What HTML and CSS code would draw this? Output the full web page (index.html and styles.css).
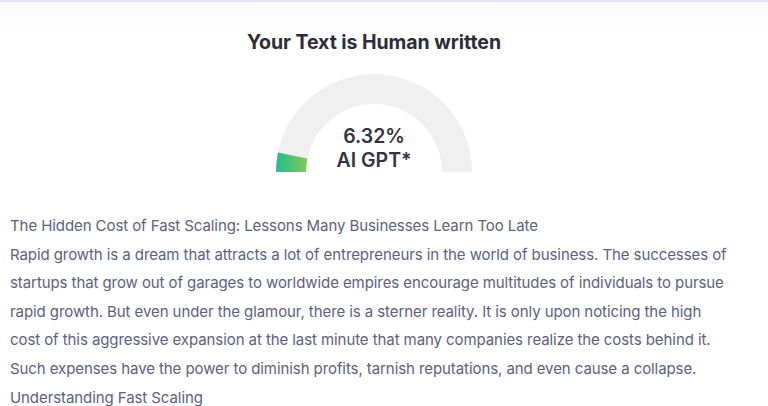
FILE: index.html
```html
<!DOCTYPE html>
<html>
<head>
<meta charset="utf-8">
<link rel="stylesheet" href="styles.css">
</head>
<body>
<div class="page">
  <div class="content">
    <h1 class="title">Your Text is Human written</h1>
    <div class="gauge">
      <svg class="gauge-svg" width="196" height="98" viewBox="0 0 196 98">
        <defs>
          <linearGradient id="g" x1="0" y1="0" x2="1" y2="0">
            <stop offset="0" stop-color="#22bd8c"/>
            <stop offset="1" stop-color="#85c85b"/>
          </linearGradient>
        </defs>
        <path d="M0 98 A98 98 0 0 1 196 98 L166 98 A68 68 0 0 0 30 98 Z" fill="#f0f0f0"/>
        <path d="M0 98 A98 98 0 0 1 1.95 78.58 L31.35 84.52 A68 68 0 0 0 30 98 Z" fill="url(#g)"/>
      </svg>
      <div class="gauge-label">
        <div class="pct">6.32%</div>
        <div class="kind">AI GPT*</div>
      </div>
    </div>
    <div class="text">
      <p>The Hidden Cost of Fast Scaling: Lessons Many Businesses Learn Too Late</p>
      <p>Rapid growth is a dream that attracts a lot of entrepreneurs in the world of business. The successes of startups that grow out of garages to worldwide empires encourage multitudes of individuals to pursue rapid growth. But even under the glamour, there is a sterner reality. It is only upon noticing the high cost of this aggressive expansion at the last minute that many companies realize the costs behind it. Such expenses have the power to diminish profits, tarnish reputations, and even cause a collapse.</p>
      <p>Understanding Fast Scaling</p>
    </div>
  </div>
</div>
</body>
</html>
```
FILE: styles.css
```css
html, body {
  margin: 0;
  padding: 0;
  background: #ffffff;
}
.page {
  border-top: 2px solid #e3e3f3;
  background: linear-gradient(#fafafc, #ffffff 30px);
  height: 404px;
  overflow: hidden;
  font-family: Inter, "Noto Sans", sans-serif;
}
.content {
  width: 748px;
}
.title {
  margin: 28px 0 0;
  text-align: center;
  font-size: 19.5px;
  line-height: 24px;
  font-weight: 700;
  color: #2c2d38;
  letter-spacing: -0.05px;
}
.gauge {
  position: relative;
  width: 196px;
  height: 98px;
  margin: 20px auto 0;
}
.gauge-svg {
  display: block;
}
.gauge-label {
  position: absolute;
  left: 0;
  right: 0;
  top: 50px;
  text-align: center;
  color: #33343f;
  font-weight: 600;
  font-size: 19.5px;
  line-height: 24px;
}
.text {
  margin: 40px 0 0;
  padding: 0 16px 0 10px;
  font-size: 15px;
  line-height: 28.6px;
  color: #5d6180;
  letter-spacing: -0.08px;
}
.text p {
  margin: 0;
}
```
